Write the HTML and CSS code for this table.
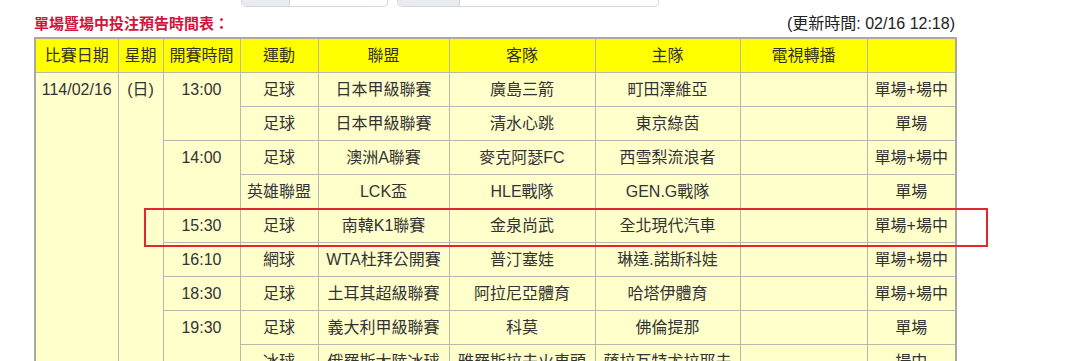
FILE: index.html
```html
<!DOCTYPE html>
<html lang="zh-Hant">
<head>
<meta charset="utf-8">
<title>單場暨場中投注預告時間表</title>
<link rel="stylesheet" href="styles.css">
</head>
<body>
<div class="page">
  <div class="toolbar">
    <div class="field field-a"><span class="addon"></span><span class="input"></span></div>
    <div class="field field-b"><span class="addon"></span><span class="input"></span></div>
  </div>
  <div class="titlebar">
    <span class="title">單場暨場中投注預告時間表：</span>
    <span class="updated">(更新時間: 02/16 12:18)</span>
  </div>
  <table class="schedule">
    <colgroup>
      <col class="c-date"><col class="c-day"><col class="c-time"><col class="c-sport"><col class="c-league"><col class="c-away"><col class="c-home"><col class="c-tv"><col class="c-type">
    </colgroup>
    <thead>
      <tr><th>比賽日期</th><th>星期</th><th>開賽時間</th><th>運動</th><th>聯盟</th><th>客隊</th><th>主隊</th><th>電視轉播</th><th></th></tr>
    </thead>
    <tbody>
      <tr><td rowspan="9">114/02/16</td><td rowspan="9">(日)</td><td rowspan="2">13:00</td><td>足球</td><td>日本甲級聯賽</td><td>廣島三箭</td><td>町田澤維亞</td><td></td><td>單場+場中</td></tr>
      <tr><td>足球</td><td>日本甲級聯賽</td><td>清水心跳</td><td>東京綠茵</td><td></td><td>單場</td></tr>
      <tr><td rowspan="2">14:00</td><td>足球</td><td>澳洲A聯賽</td><td>麥克阿瑟FC</td><td>西雪梨流浪者</td><td></td><td>單場+場中</td></tr>
      <tr><td>英雄聯盟</td><td>LCK盃</td><td>HLE戰隊</td><td>GEN.G戰隊</td><td></td><td>單場</td></tr>
      <tr><td>15:30</td><td>足球</td><td>南韓K1聯賽</td><td>金泉尚武</td><td>全北現代汽車</td><td></td><td>單場+場中</td></tr>
      <tr><td>16:10</td><td>網球</td><td>WTA杜拜公開賽</td><td>普汀塞娃</td><td>琳達.諾斯科娃</td><td></td><td>單場+場中</td></tr>
      <tr><td>18:30</td><td>足球</td><td>土耳其超級聯賽</td><td>阿拉尼亞體育</td><td>哈塔伊體育</td><td></td><td>單場+場中</td></tr>
      <tr><td rowspan="2">19:30</td><td>足球</td><td>義大利甲級聯賽</td><td>科莫</td><td>佛倫提那</td><td></td><td>單場</td></tr>
      <tr><td>冰球</td><td>俄羅斯大陸冰球</td><td>雅羅斯拉夫火車頭</td><td>薩拉瓦特尤拉耶夫</td><td></td><td>場中</td></tr>
    </tbody>
  </table>
  <div class="highlight"></div>
</div>
</body>
</html>
```

FILE: styles.css
```css
html, body {
  margin: 0;
  padding: 0;
  background: #ffffff;
}

body {
  font-family: "Liberation Sans", Arial, "Noto Sans CJK TC", sans-serif;
  color: #333333;
}

.page {
  position: relative;
  width: 921px;
  padding-left: 34px;
}

.toolbar {
  display: flex;
  gap: 9px;
  margin-left: 207px;
  height: 7px;
}

.field {
  display: flex;
  height: 6px;
  border: 1px solid #d3d8de;
  border-top: none;
  border-radius: 0 0 5px 5px;
  overflow: hidden;
  background: #ffffff;
}

.field-a { width: 145px; }
.field-b { width: 260px; }

.field-a .addon { width: 47px; }
.field-b .addon { width: 61px; }

.addon {
  background: #e9ecef;
  border-right: 1px solid #d3d8de;
}

.input {
  flex: 1;
}

.titlebar {
  display: flex;
  justify-content: space-between;
  align-items: flex-end;
  height: 30px;
  box-sizing: border-box;
  padding-bottom: 3px;
  line-height: 20px;
}

.title {
  font-size: 15px;
  font-weight: bold;
  color: #d0143c;
}

.updated {
  font-size: 16px;
  color: #222222;
}

.schedule {
  width: 921px;
  table-layout: fixed;
  border-collapse: collapse;
  border: 2px solid #a9a9a0;
  font-size: 16px;
}

.c-date { width: 83px; }
.c-day { width: 45px; }
.c-time { width: 77px; }
.c-sport { width: 78px; }
.c-league { width: 131px; }
.c-away { width: 146px; }
.c-home { width: 145px; }
.c-tv { width: 127px; }
.c-type { width: 89px; }

.schedule th,
.schedule td {
  border: 1px solid #b8b8ac;
  padding: 6px 0;
  line-height: 21px;
  height: 21px;
  text-align: center;
  vertical-align: top;
  white-space: nowrap;
  overflow: hidden;
  font-weight: normal;
}

.schedule th {
  background: #ffff00;
  color: #333322;
}

.schedule td {
  background: #ffffcc;
  color: #333333;
}

.highlight {
  position: absolute;
  left: 144px;
  top: 208px;
  width: 840px;
  height: 35px;
  border: 2px solid #e3262f;
}
```
